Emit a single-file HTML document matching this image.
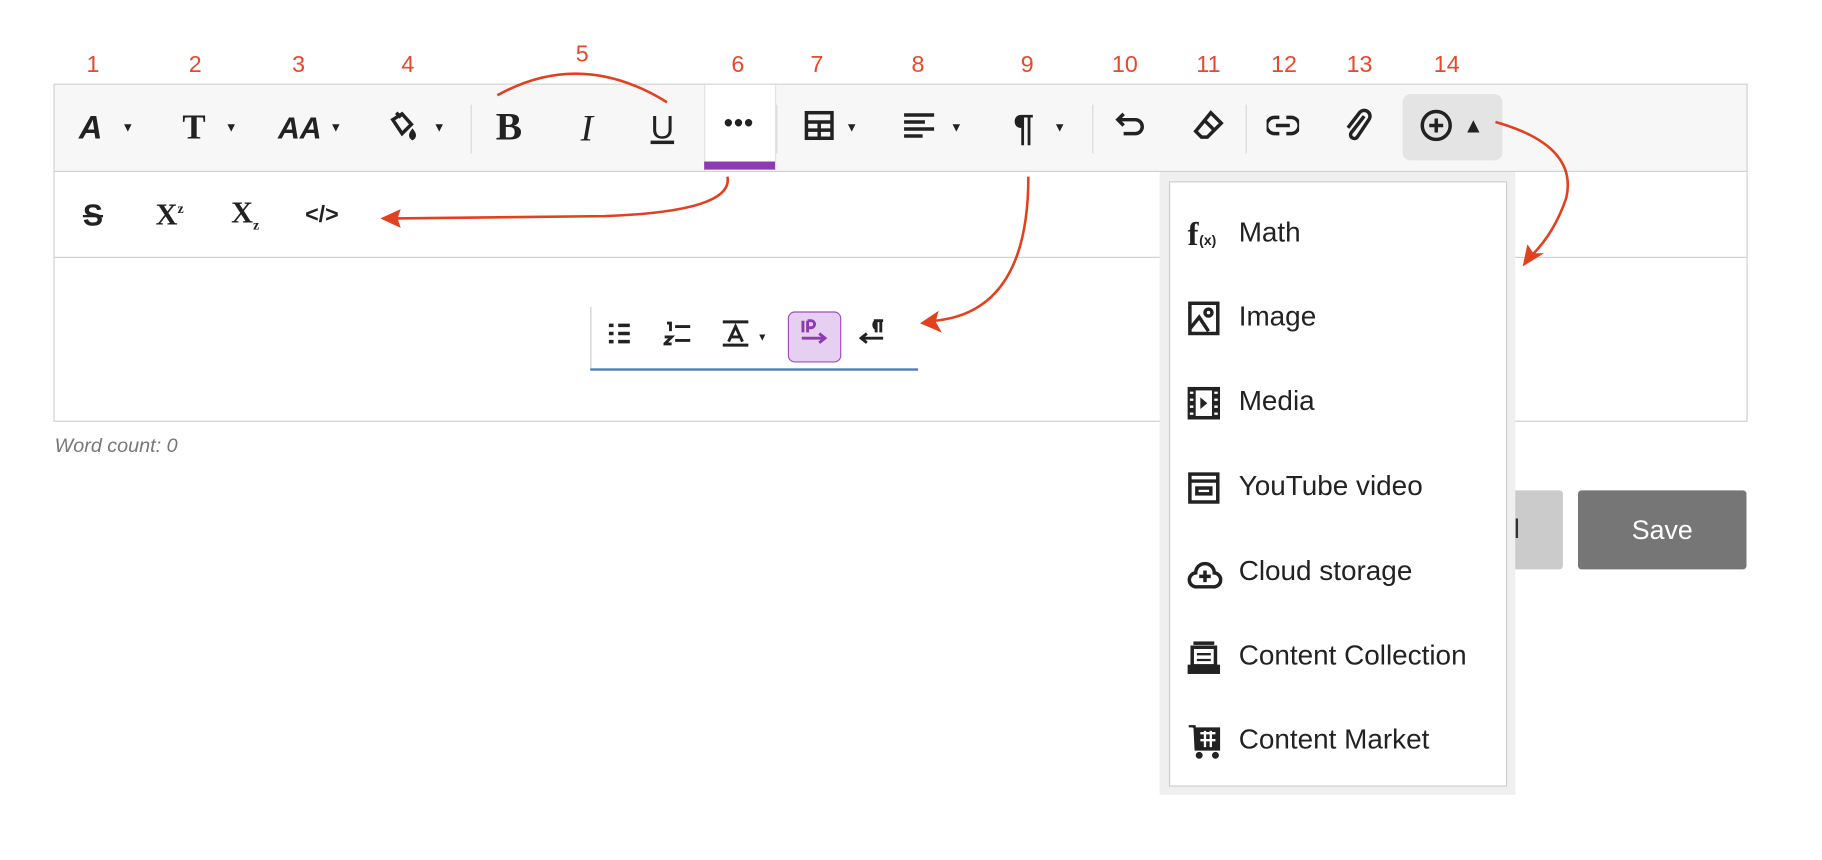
<!DOCTYPE html>
<html><head><meta charset="utf-8"><style>
html,body{margin:0;padding:0;width:1822px;height:860px;overflow:hidden;background:#fff;font-family:"Liberation Sans",sans-serif}
#s{position:absolute;left:0;top:0;width:1568px;height:740px;transform:scale(1.162);transform-origin:0 0}
.a{position:absolute}
.n{position:absolute;color:#e8472a;font-size:20px;transform:translateX(-50%);top:45px}
.ic{position:absolute;color:#222;font-weight:bold;transform:translate(-50%,-50%);line-height:1;white-space:nowrap}
.car{position:absolute;font-size:11px;color:#222;transform:translate(-50%,-50%)}
.sep{position:absolute;width:1px;background:#d8d8d8;top:90px;height:42px}
.it{position:absolute;left:1016px;height:30px}
.it span{position:absolute;left:50px;top:0;font-size:24px;color:#222;line-height:30px;white-space:nowrap}
.it svg{position:absolute;left:6px;top:1px}
</style></head><body><div id="s">
<div class="n" style="left:80px">1</div><div class="n" style="left:168px">2</div><div class="n" style="left:257px">3</div><div class="n" style="left:351px">4</div><div class="n" style="left:501px;top:36px">5</div><div class="n" style="left:635px">6</div><div class="n" style="left:703px">7</div><div class="n" style="left:790px">8</div><div class="n" style="left:884px">9</div><div class="n" style="left:968px">10</div><div class="n" style="left:1040px">11</div><div class="n" style="left:1105px">12</div><div class="n" style="left:1170px">13</div><div class="n" style="left:1245px">14</div>
<div class="a" style="left:46px;top:72px;width:1456px;height:289px;border:1px solid #cfcfcf"></div>
<div class="a" style="left:47px;top:73px;width:1456px;height:74px;background:#f7f7f7;border-bottom:1px solid #d0d0d0"></div>
<div class="a" style="left:47px;top:221px;width:1456px;height:1px;background:#d0d0d0"></div>
<div class="a" style="left:606px;top:73px;width:60px;height:74px;background:#fff;border-left:1px solid #e2e2e2;border-right:1px solid #e2e2e2"></div>
<div class="a" style="left:606px;top:139px;width:61px;height:7px;background:#8c3bb0"></div>
<div class="a" style="left:1207px;top:81px;width:86px;height:57px;background:#e4e4e4;border-radius:7px"></div>
<div class="sep" style="left:405px"></div><div class="sep" style="left:668px"></div><div class="sep" style="left:940px"></div><div class="sep" style="left:1072px"></div>
<div class="ic" style="left:78px;top:110px;font-size:28px;font-style:italic">A</div><div class="car" style="left:110px;top:110px">▼</div>
<div class="ic" style="left:167px;top:110px;font-size:30px;font-family:'Liberation Serif',serif">T</div><div class="car" style="left:199px;top:110px">▼</div>
<div class="ic" style="left:258px;top:110px;font-size:26px;font-style:italic">AA</div><div class="car" style="left:289px;top:110px">▼</div>
<div class="ic" style="left:347px;top:110px"><svg width="28" height="28" viewBox="0 0 28 28" fill="none" stroke="#222" stroke-width="3"><path d="M5 9 L13 4 L21 13 L13 21 Z"/><path d="M8 3 L12 7"/><path d="M22 19 q-3 4 0 6 q3 -2 0 -6z"/></svg></div><div class="car" style="left:378px;top:110px">▼</div>
<div class="ic" style="left:438px;top:110px;font-size:34px;font-family:'Liberation Serif',serif">B</div>
<div class="ic" style="left:505px;top:110px;font-size:32px;font-family:'Liberation Serif',serif;font-style:italic;font-weight:normal">I</div>
<div class="ic" style="left:570px;top:110px;font-size:28px;font-weight:normal;text-decoration:underline;text-decoration-thickness:3px">U</div>
<div class="ic" style="left:636px;top:106px;font-size:22px;letter-spacing:1px">•••</div>
<div class="ic" style="left:705px;top:110px"><svg width="26" height="26" viewBox="0 0 26 26" fill="none" stroke="#222" stroke-width="3"><rect x="2" y="2" width="22" height="22"/><path d="M2 10H24M2 17H24M13 10V24"/></svg></div><div class="car" style="left:733px;top:110px">▼</div>
<div class="ic" style="left:791px;top:110px"><svg width="26" height="22" viewBox="0 0 26 22" stroke="#222" stroke-width="3"><path d="M0 2H26M0 8H18M0 14H26M0 20H16"/></svg></div><div class="car" style="left:823px;top:110px">▼</div>
<div class="ic" style="left:881px;top:110px;font-size:32px">¶</div><div class="car" style="left:912px;top:110px">▼</div>
<div class="ic" style="left:973px;top:110px"><svg width="28" height="26" viewBox="0 0 28 26" fill="none" stroke="#222" stroke-width="3"><path d="M8 3 L3 8 L8 13"/><path d="M3 8 H18 a6 6 0 0 1 0 12 H8"/></svg></div>
<div class="ic" style="left:1040px;top:110px"><svg width="28" height="28" viewBox="0 0 28 28" fill="none" stroke="#222" stroke-width="3"><path d="M16 3 L25 12 L13 24 L8 24 L3 19 Z"/><path d="M10 9 L19 18"/></svg></div>
<div class="ic" style="left:1104px;top:110px"><svg width="28" height="18" viewBox="0 0 28 18" fill="none" stroke="#222" stroke-width="3"><path d="M11 2H7a7 7 0 0 0 0 14H11M17 2H21a7 7 0 0 1 0 14H17M8 9H20"/></svg></div>
<div class="ic" style="left:1169px;top:110px"><svg width="26" height="32" viewBox="0 0 26 32" fill="none" stroke="#222" stroke-width="3"><path d="M18 8 L7 22 a3 3 0 0 0 5 4 L22 11 a5 5 0 0 0 -8 -6 L4 18"/></svg></div>
<div class="ic" style="left:1236px;top:110px"><svg width="30" height="30" viewBox="0 0 30 30" fill="none" stroke="#222" stroke-width="3"><circle cx="15" cy="15" r="12"/><path d="M15 9V21M9 15H21"/></svg></div>
<div class="ic" style="left:1268px;top:108px;font-size:18px">▲</div>
<div class="ic" style="left:80px;top:185px;font-size:26px;text-decoration:line-through">S</div>
<div class="ic" style="left:146px;top:185px;font-size:26px;font-family:'Liberation Serif',serif">X<sup style="font-size:12px">z</sup></div>
<div class="ic" style="left:211px;top:185px;font-size:26px;font-family:'Liberation Serif',serif">X<sub style="font-size:12px">z</sub></div>
<div class="ic" style="left:277px;top:185px;font-size:20px">&lt;/&gt;</div>
<div class="a" style="left:508px;top:264px;width:1px;height:54px;background:#ccc"></div>
<div class="a" style="left:508px;top:317px;width:282px;height:2px;background:#4a78c2"></div>
<div class="a" style="left:678px;top:268px;width:44px;height:42px;background:#e6cff0;border:1px solid #9a4fbf;border-radius:6px"></div>
<div class="ic" style="left:533px;top:289px"><svg width="20" height="20" viewBox="0 0 20 20" stroke="#222" stroke-width="3"><path d="M1 3H5M9 3H19M1 10H5M9 10H19M1 17H5M9 17H19"/></svg></div>
<div class="ic" style="left:583px;top:289px"><svg width="24" height="22" viewBox="0 0 24 22" fill="none" stroke="#222" stroke-width="2.5"><path d="M3 2H6V9M1 14H7L1 20H7M10 5H23M10 17H23"/></svg></div>
<div class="ic" style="left:633px;top:289px"><svg width="24" height="24" viewBox="0 0 24 24" fill="none" stroke="#222" stroke-width="2.5"><path d="M1 2H23M1 22H23M6 19L12 6L18 19M8 15H16"/></svg></div><div class="car" style="left:656px;top:290px;font-size:9px">▼</div>
<div class="ic" style="left:700px;top:289px"><svg width="26" height="26" viewBox="0 0 26 26" fill="none" stroke="#8c3bb0" stroke-width="2.5"><path d="M4 2V12M8 2V12M8 2H11a3 3 0 0 1 0 6H8M3 17H22M18 13L23 17L18 21"/></svg></div>
<div class="ic" style="left:751px;top:289px"><svg width="26" height="26" viewBox="0 0 26 26" fill="none" stroke="#222" stroke-width="2.5"><path d="M14 2H22M16 2V12M20 2V12M16 2a4 4 0 0 0 0 7M22 17H3M8 13L3 17L8 21"/></svg></div>
<div class="a" style="left:47px;top:374px;font-size:17px;font-style:italic;color:#777">Word count: 0</div>
<div class="a" style="left:1240px;top:422px;width:105px;height:68px;background:#cbcbcb;border-radius:3px"></div>
<div class="a" style="left:1290px;top:442px;font-size:23px;color:#333">el</div>
<div class="a" style="left:1358px;top:422px;width:145px;height:68px;background:#767676;border-radius:3px;color:#fff;font-size:23px;text-align:center;line-height:68px">Save</div>
<div class="a" style="left:998px;top:148px;width:306px;height:536px;background:#efefef"></div>
<div class="a" style="left:1006px;top:156px;width:289px;height:519px;background:#fff;border:1px solid #cdcdcd"></div>
<div class="it" style="top:186px"><svg width="30" height="30" viewBox="0 0 30 30"><text x="0" y="24" font-size="28" font-family="Liberation Serif" font-weight="bold" fill="#222">f</text><text x="10" y="24" font-size="12" font-weight="bold" fill="#222" font-family="Liberation Sans">(x)</text></svg><span>Math</span></div>
<div class="it" style="top:258px"><svg width="28" height="30" viewBox="0 0 28 30" fill="none" stroke="#222" stroke-width="3"><rect x="2" y="2" width="24" height="26"/><circle cx="18" cy="10" r="3"/><path d="M2 24L10 14L18 26"/></svg><span>Image</span></div>
<div class="it" style="top:331px"><svg width="28" height="30" viewBox="0 0 28 30"><rect x="0" y="1" width="28" height="28" fill="#222"/><rect x="7" y="4" width="14" height="22" fill="#fff"/><path d="M11 10L17 15L11 20Z" fill="#222"/><path d="M2 6H5M2 12H5M2 18H5M2 24H5M23 6H26M23 12H26M23 18H26M23 24H26" stroke="#fff" stroke-width="2"/></svg><span>Media</span></div>
<div class="it" style="top:404px"><svg width="28" height="30" viewBox="0 0 28 30" fill="none" stroke="#222" stroke-width="3"><rect x="2" y="3" width="24" height="24"/><path d="M2 9H26"/><rect x="8" y="15" width="12" height="5"/></svg><span>YouTube video</span></div>
<div class="it" style="top:477px"><svg width="30" height="30" viewBox="0 0 30 30" fill="none" stroke="#222" stroke-width="3"><path d="M8 27H22a6 6 0 0 0 1-12a8 8 0 0 0-16 0a6 6 0 0 0 1 12Z"/><path d="M15 13V23M10 18H20"/></svg><span>Cloud storage</span></div>
<div class="it" style="top:550px"><svg width="28" height="30" viewBox="0 0 28 30"><rect x="5" y="1" width="18" height="3" fill="#222"/><rect x="4" y="6" width="20" height="16" fill="none" stroke="#222" stroke-width="3"/><path d="M8 12H20M8 17H20" stroke="#222" stroke-width="2"/><rect x="0" y="21" width="28" height="8" fill="#222"/></svg><span>Content Collection</span></div>
<div class="it" style="top:622px"><svg width="30" height="32" viewBox="0 0 30 32"><path d="M1 2H6L7 22H27V4H7" fill="#222" stroke="#222" stroke-width="2"/><path d="M11 8H24M11 14H24M15 6V20M20 6V20" stroke="#fff" stroke-width="2"/><circle cx="10" cy="27" r="3" fill="#222"/><circle cx="24" cy="27" r="3" fill="#222"/></svg><span>Content Market</span></div>
<svg class="a" style="left:0;top:0" width="1568" height="740" fill="none" stroke="#e2401f" stroke-width="2.2">
<path d="M428 82 Q500 42 574 88"/>
<path d="M626 152 Q632 182 520 186 L340 188"/><path d="M330 188 L343 182 L341 188 L343 194 Z" fill="#e2401f"/>
<path d="M885 152 Q885 268 805 276"/><path d="M794 278 L806 270 L804 277 L808 284 Z" fill="#e2401f"/>
<path d="M1287 105 Q1358 125 1348 170 Q1338 200 1318 220"/><path d="M1312 227 L1315 213 L1319 219 L1325 219 Z" fill="#e2401f"/>
</svg>
</div></body></html>
